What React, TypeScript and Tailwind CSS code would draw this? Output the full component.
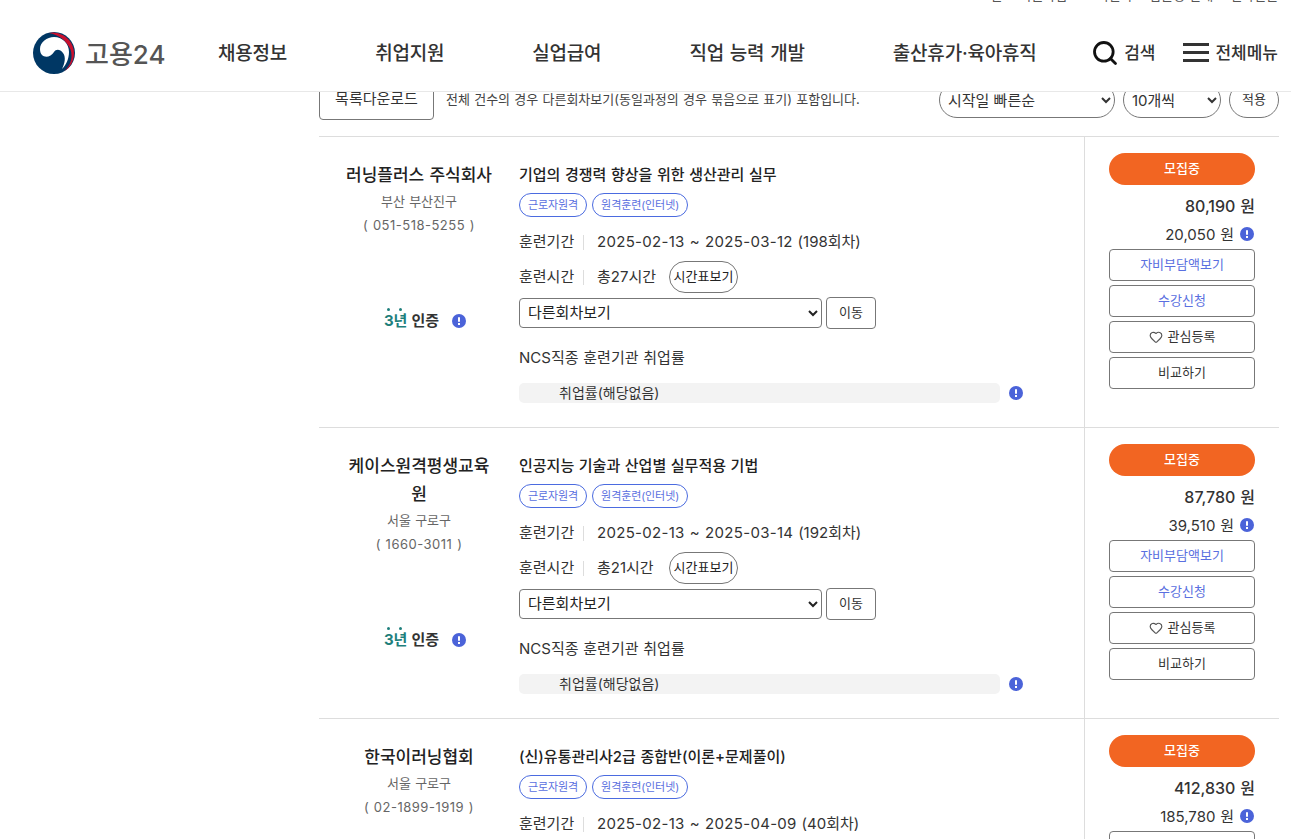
import { Search, Heart } from 'lucide-react'

const FONT = 'font-["Inter","Noto_Sans_CJK_KR",sans-serif]'

const NAV = ['채용정보', '취업지원', '실업급여', '직업 능력 개발', '출산휴가·육아휴직']

const COURSES = [
  {
    org: '러닝플러스 주식회사',
    area: '부산 부산진구',
    tel: '( 051-518-5255 )',
    title: '기업의 경쟁력 향상을 위한 생산관리 실무',
    dates: '2025-02-13 ~ 2025-03-12',
    round: '(198회차)',
    hours: '총27시간',
    price: '80,190 원',
    self: '20,050 원',
  },
  {
    org: '케이스원격평생교육원',
    area: '서울 구로구',
    tel: '( 1660-3011 )',
    title: '인공지능 기술과 산업별 실무적용 기법',
    dates: '2025-02-13 ~ 2025-03-14',
    round: '(192회차)',
    hours: '총21시간',
    price: '87,780 원',
    self: '39,510 원',
  },
  {
    org: '한국이러닝협회',
    area: '서울 구로구',
    tel: '( 02-1899-1919 )',
    title: '(신)유통관리사2급 종합반(이론+문제풀이)',
    dates: '2025-02-13 ~ 2025-04-09',
    round: '(40회차)',
    hours: '총60시간',
    price: '412,830 원',
    self: '185,780 원',
  },
]

function InfoDot() {
  return (
    <span className="inline-flex h-[14px] w-[14px] flex-shrink-0 items-start justify-center rounded-full bg-[#4b63d9] pt-[3px]">
      <span className="relative h-[5px] w-[2px] rounded-sm bg-white">
        <span className="absolute left-0 top-[6px] h-[2px] w-[2px] bg-white" />
      </span>
    </span>
  )
}

function Logo() {
  return (
    <svg width="42" height="42" viewBox="0 0 42 42" className="flex-shrink-0">
      <circle cx="21" cy="21" r="21" fill="#003764" />
      <path d="M7 17 C7 10 14 5 21 5 C30 5 36 12 36 20 C36 27 33 33 29 37 C32 31 33 25 30 21 C27 17 23 17 21 20 C18 25 12 26 9 23 C7.5 21.500 7 19 7 17Z" fill="#fff" />
      <path d="M16 1 A21 21 0 0 1 31 39.500 C38 33 40 25 37.500 17.500 C33.500 8 25 2.500 16 1Z" fill="#c8102e" />
    </svg>
  )
}

function Header() {
  return (
    <header className="fixed left-0 right-0 top-0 z-10 h-[92px] border-b border-[#e8e8e8] bg-white">
      <div className="flex h-[4px] justify-end overflow-hidden pr-[13px] text-[13px] leading-[4px] text-[#555]">
        <span className="-translate-y-[7px] whitespace-nowrap">로그인&nbsp;&nbsp;&nbsp;&nbsp;회원가입&nbsp;&nbsp;&nbsp;&nbsp;고객센터&nbsp;&nbsp;&nbsp;&nbsp;접근성 안내&nbsp;&nbsp;&nbsp;&nbsp;전자민원</span>
      </div>
      <div className="mt-[10px] flex h-[77px] items-center pl-[33px] pr-[13px]">
        <Logo />
        <span className="ml-[10px] mt-[3px] w-[80px] whitespace-nowrap text-[26px] font-medium text-[#555]">고용24</span>
        <nav className="ml-[53px] mt-[3px] flex gap-[88px] whitespace-nowrap text-[19px] font-medium tracking-[-0.2px] text-[#333] [word-spacing:1px]">
          {NAV.map(n => <a key={n}>{n}</a>)}
        </nav>
        <div className="ml-auto flex items-center text-[17px] font-medium text-[#333]">
          <Search size={28} strokeWidth={2.4} className="text-[#111]" />
          <span className="ml-[5px] mt-[2px]">검색</span>
          <span className="ml-[28px] flex w-[26px] flex-col gap-[5px]">
            <i className="h-[3px] bg-[#333]" />
            <i className="h-[3px] bg-[#333]" />
            <i className="h-[3px] bg-[#333]" />
          </span>
          <span className="ml-[6px] mt-[2px]">전체메뉴</span>
        </div>
      </div>
    </header>
  )
}

function Course({ c }: { c: typeof COURSES[number] }) {
  return (
    <div className="flex h-[291px] border-t border-[#ddd]">
      {/* Left — org */}
      <div className="w-[200px] flex-shrink-0 pl-[24px] pr-[24px] pt-[24px] text-center">
        <p className="text-[17px] font-medium leading-[28px] text-[#222]">{c.org}</p>
        <p className="text-[13px] leading-[24px] text-[#666]">{c.area}</p>
        <p className="text-[13px] leading-[24px] tracking-[0.5px] text-[#666]">{c.tel}</p>
        <div className="ml-[12px] mt-[72px] flex items-center justify-center gap-[13px]">
          <span className="relative whitespace-nowrap text-[15px] font-bold leading-[24px]">
            <span className="text-[#1f7f7c]">3년</span> <span className="text-[#333]">인증</span>
            <i className="absolute left-[3px] top-[-1px] h-[3px] w-[3px] rounded-full bg-[#1f7f7c]" />
            <i className="absolute left-[15px] top-[-1px] h-[3px] w-[3px] rounded-full bg-[#1f7f7c]" />
          </span>
          <InfoDot />
        </div>
      </div>

      {/* Center — course */}
      <div className="w-[566px] flex-shrink-0 border-r border-[#ddd] pt-[24px]">
        <p className="text-[15px] font-medium leading-[28px] text-[#222]">{c.title}</p>
        <div className="mt-[4px] flex gap-[5px] tracking-[-0.1px]">
          <span className="flex h-[24px] items-center rounded-full border border-[#4b6be0] px-[8px] text-[11px] text-[#5a6fe0]">근로자원격</span>
          <span className="flex h-[24px] items-center rounded-full border border-[#4b6be0] px-[8px] text-[11px] text-[#5a6fe0]">원격훈련(인터넷)</span>
        </div>
        <div className="mt-[13px] flex h-[24px] items-center whitespace-nowrap text-[15px] text-[#333]">
          <span className="mt-[1px] w-[55px]">훈련기간</span>
          <i className="mx-[9px] h-[15px] w-px bg-[#ddd]" />
          <span className="ml-[4px] mt-[1px]"><span className="tracking-[0.3px]">{c.dates}</span> {c.round}</span>
        </div>
        <div className="mt-[7px] flex h-[32px] items-center whitespace-nowrap text-[15px] text-[#333]">
          <span className="w-[55px]">훈련시간</span>
          <i className="mx-[9px] h-[15px] w-px bg-[#ddd]" />
          <span className="ml-[4px] w-[59px]">{c.hours}</span>
          <button className="ml-[13px] h-[32px] w-[69px] rounded-full border border-[#777] text-[13px] text-[#222]">시간표보기</button>
        </div>
        <div className="mt-[4px] flex items-center gap-[4px]">
          <select className="h-[30px] w-[303px] rounded-[4px] border border-[#777] bg-white pb-[1px] pl-[4px] text-[15px] text-[#222]">
            <option>다른회차보기</option>
          </select>
          <button className="h-[32px] w-[50px] rounded-[4px] border border-[#777] text-[13px] text-[#333]">이동</button>
        </div>
        <p className="mt-[15px] text-[15px] leading-[28px] text-[#333]">NCS직종 훈련기관 취업률</p>
        <div className="mt-[11px] flex items-center gap-[9px]">
          <div className="h-[20px] w-[481px] rounded-[5px] bg-[#f3f3f3] pl-[40px] text-[14px] leading-[20px] text-[#333]">취업률(해당없음)</div>
          <InfoDot />
        </div>
      </div>

      {/* Right — price */}
      <div className="flex-1 px-[24px] pt-[16px]">
        <div className="flex h-[32px] items-center justify-center rounded-full bg-[#f26522] text-[13px] font-medium text-white">모집중</div>
        <p className="mt-[7px] text-right text-[16px] font-medium leading-[28px] text-[#333]">{c.price}</p>
        <div className="flex h-[29px] items-center justify-end gap-[6px] pr-[1px] text-[15px] text-[#333]">
          <span className="mt-[1px]">{c.self}</span>
          <span className="-mt-[2px] flex"><InfoDot /></span>
        </div>
        <div className="flex flex-col gap-[4px] text-[13px]">
          <button className="h-[32px] rounded-[4px] border border-[#777] text-[#5a6fe0]">자비부담액보기</button>
          <button className="h-[32px] rounded-[4px] border border-[#777] text-[#5a6fe0]">수강신청</button>
          <button className="flex h-[32px] items-center justify-center gap-[5px] rounded-[4px] border border-[#777] text-[#333]">
            <Heart size={14} strokeWidth={2} className="text-[#555]" /> 관심등록
          </button>
          <button className="h-[32px] rounded-[4px] border border-[#777] text-[#333]">비교하기</button>
        </div>
      </div>
    </div>
  )
}

export default function App() {
  return (
    <div className={`${FONT} h-[839px] overflow-hidden bg-white [word-spacing:0.6px]`}>
      <Header />
      <main className="ml-[319px] w-[960px] pt-[78px]">
        <div className="mb-[16px] flex h-[42px] items-center">
          <button className="h-[42px] w-[115px] rounded-[4px] border border-[#777] text-[15px] text-[#333]">목록다운로드</button>
          <span className="ml-[12px] mt-[2px] text-[13px] text-[#444]">전체 건수의 경우 다른회차보기(동일과정의 경우 묶음으로 표기) 포함입니다.</span>
          <div className="ml-auto mt-[2px] flex gap-[8px]">
            <select className="h-[36px] w-[176px] rounded-full border border-[#777] bg-white pl-[4px] text-[15px] text-[#333]">
              <option>시작일 빠른순</option>
            </select>
            <select className="h-[36px] w-[98px] rounded-full border border-[#777] bg-white pl-[4px] text-[15px] text-[#333]">
              <option>10개씩</option>
            </select>
            <button className="h-[36px] w-[50px] rounded-full border border-[#777] text-[13px] text-[#333]">적용</button>
          </div>
        </div>
        {COURSES.map(c => <Course key={c.org} c={c} />)}
      </main>
    </div>
  )
}
